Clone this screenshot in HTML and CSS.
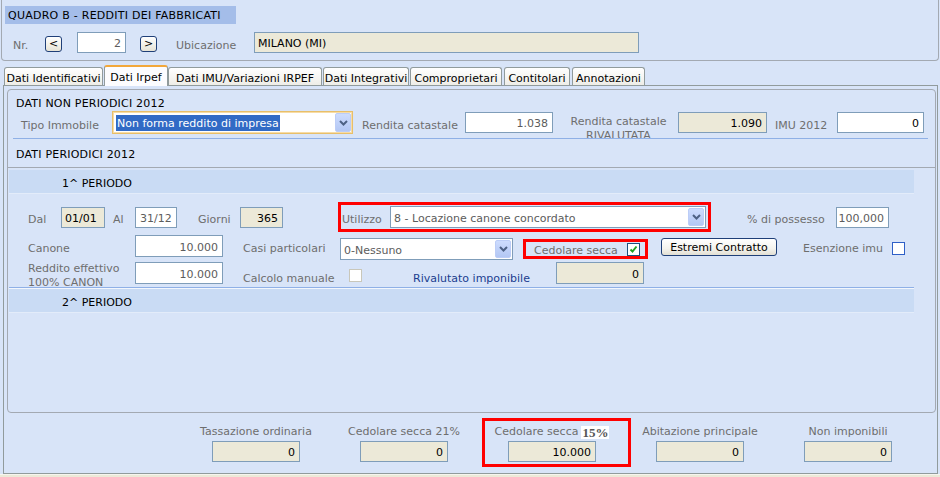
FILE: index.html
```html
<!DOCTYPE html>
<html>
<head>
<meta charset="utf-8">
<title>Quadro B</title>
<link rel="stylesheet" href="styles.css">
</head>
<body>
<div class="frame">
  <div class="head-box">
    <div class="quadro">QUADRO B - REDDITI DEI FABBRICATI</div>
    <div class="nr-row">
      <span class="lbl nr-lbl">Nr.</span>
      <div class="nav">&lt;</div>
      <div class="fld nr-fld">2</div>
      <div class="nav nav-next">&gt;</div>
      <span class="lbl ub-lbl">Ubicazione</span>
      <div class="fld ro ub-fld">MILANO (MI)</div>
    </div>
  </div>

  <div class="tabs">
    <div class="tab t1">Dati Identificativi</div>
    <div class="tab t2 active">Dati Irpef</div>
    <div class="tab t3">Dati IMU/Variazioni IRPEF</div>
    <div class="tab t4">Dati Integrativi</div>
    <div class="tab t5">Comproprietari</div>
    <div class="tab t6">Contitolari</div>
    <div class="tab t7">Annotazioni</div>
  </div>

  <div class="panel">
    <div class="inner">
      <div class="sec-title">DATI NON PERIODICI 2012</div>
      <div class="np-row">
        <span class="lbl tipo-lbl">Tipo Immobile</span>
        <div class="sel focus tipo-sel">
          <span class="hilite">Non forma reddito di impresa</span>
          <span class="dd"><svg width="9" height="6" viewBox="0 0 9 6"><path d="M1 1l3.5 3.5L8 1" fill="none" stroke="#4d6185" stroke-width="2"/></svg></span>
        </div>
        <span class="lbl rend-lbl">Rendita catastale</span>
        <div class="fld rend-fld">1.038</div>
        <span class="lbl riv-lbl">Rendita catastale<br>RIVALUTATA</span>
        <div class="fld ro riv-fld">1.090</div>
        <span class="lbl imu-lbl">IMU 2012</span>
        <div class="fld dark imu-fld">0</div>
      </div>
      <div class="sep"></div>
      <div class="sec-title per-title">DATI PERIODICI 2012</div>

      <div class="periods">
        <div class="band">1^ PERIODO</div>
        <div class="pbody">
          <div class="prow row1">
            <span class="lbl dal-lbl">Dal</span>
            <div class="fld ro dal-fld">01/01</div>
            <span class="lbl al-lbl">Al</span>
            <div class="fld al-fld">31/12</div>
            <span class="lbl gg-lbl">Giorni</span>
            <div class="fld ro gg-fld">365</div>
            <div class="hl hl-util">
              <span class="lbl util-lbl">Utilizzo</span>
              <div class="sel util-sel">
                <span class="sel-text">8 - Locazione canone concordato</span>
                <span class="dd"><svg width="9" height="6" viewBox="0 0 9 6"><path d="M1 1l3.5 3.5L8 1" fill="none" stroke="#4d6185" stroke-width="2"/></svg></span>
              </div>
            </div>
            <span class="lbl poss-lbl">% di possesso</span>
            <div class="fld poss-fld">100,000</div>
          </div>

          <div class="prow row2">
            <span class="lbl can-lbl">Canone</span>
            <div class="fld can-fld">10.000</div>
            <span class="lbl casi-lbl">Casi particolari</span>
            <div class="sel casi-sel">
              <span class="sel-text">0-Nessuno</span>
              <span class="dd"><svg width="9" height="6" viewBox="0 0 9 6"><path d="M1 1l3.5 3.5L8 1" fill="none" stroke="#4d6185" stroke-width="2"/></svg></span>
            </div>
            <div class="hl hl-ced">
              <span class="lbl ced-lbl">Cedolare secca</span>
              <span class="chk on"><svg width="11" height="11" viewBox="0 0 11 11"><path d="M2.5 5.5l2 2 4-5" fill="none" stroke="#21a121" stroke-width="2"/></svg></span>
            </div>
            <div class="btn estremi">Estremi Contratto</div>
            <span class="lbl esen-lbl">Esenzione imu</span>
            <span class="chk esen-chk"></span>
          </div>

          <div class="prow row3">
            <span class="lbl red-lbl">Reddito effettivo<br>100% CANON</span>
            <div class="fld red-fld">10.000</div>
            <span class="lbl calc-lbl">Calcolo manuale</span>
            <span class="chk off"></span>
            <span class="rival-lbl">Rivalutato imponibile</span>
            <div class="fld ro rival-fld">0</div>
          </div>
        </div>
        <div class="psep"></div>
        <div class="band">2^ PERIODO</div>
      </div>
    </div>

    <div class="summary">
      <div class="scol">
        <span class="lbl">Tassazione ordinaria</span>
        <div class="fld ro sfld">0</div>
      </div>
      <div class="scol">
        <span class="lbl">Cedolare secca 21%</span>
        <div class="fld ro sfld">0</div>
      </div>
      <div class="scol marked">
        <span class="lbl">Cedolare secca <b class="pct">15%</b></span>
        <div class="fld ro sfld">10.000</div>
      </div>
      <div class="scol">
        <span class="lbl">Abitazione principale</span>
        <div class="fld ro sfld">0</div>
      </div>
      <div class="scol">
        <span class="lbl">Non imponibili</span>
        <div class="fld ro sfld">0</div>
      </div>
    </div>
  </div>
  <div class="bottom-strip"></div>
</div>
</body>
</html>
```

FILE: styles.css
```css
*, *::before, *::after { box-sizing: border-box; }

html, body {
  margin: 0;
  padding: 0;
}

body {
  width: 940px;
  height: 477px;
  overflow: hidden;
  background: #d8e4f8;
  font-family: "DejaVu Sans", Tahoma, sans-serif;
  font-size: 11px;
  color: #000;
}

.frame {
  width: 940px;
  height: 477px;
  display: flex;
  flex-direction: column;
}

.lbl {
  color: #6e6e6e;
  white-space: nowrap;
}
.nr-row .lbl,
.np-row .lbl,
.prow .lbl {
  margin-top: 5px;
}

/* generic field */
.fld {
  height: 21px;
  border: 1px solid #7f9db9;
  background: #fff;
  display: flex;
  align-items: center;
  justify-content: flex-end;
  padding: 2px 4px 0;
  color: #5c5c5c;
  white-space: nowrap;
  flex: none;
}
.fld.ro {
  background: #ece9d8;
  color: #000;
}
.fld.dark { color: #000; }

/* header box */
.head-box {
  margin: 0 1px;
  height: 61px;
  border: 1px solid #a3a9b2;
  border-top: none;
  border-radius: 0 0 4px 4px;
  padding: 6px 0 0 3px;
  flex: none;
}
.quadro {
  width: 231px;
  height: 18px;
  line-height: 18px;
  background: #a4bde9;
  padding: 1px 0 0 3px;
  letter-spacing: 0.25px;
  white-space: nowrap;
}
.nr-row {
  margin-top: 8px;
  height: 21px;
  display: flex;
  align-items: center;
}
.nr-row .nr-lbl { margin-left: 8px; width: 32px; margin-top: 6px; }
.nav {
  width: 17px;
  height: 16px;
  border: 1px solid #1f3f78;
  border-radius: 3px;
  background: linear-gradient(#ffffff, #e6e3d6);
  display: flex;
  align-items: center;
  justify-content: center;
  font-size: 11px;
  line-height: 1;
  flex: none;
  margin-top: 2px;
}
.nr-fld { width: 49px; margin-left: 15px; }
.nav-next { margin-left: 14px; }
.nr-row .ub-lbl { margin-left: 19px; width: 78px; margin-top: 6px; }
.ub-fld { width: 385px; justify-content: flex-start; padding-left: 3px; }

/* tabs */
.tabs {
  margin-top: 4px;
  height: 20px;
  padding-left: 4px;
  display: flex;
  align-items: flex-end;
  flex: none;
  position: relative;
  z-index: 2;
}
.tab {
  height: 18px;
  border: 1px solid #919b9c;
  border-bottom: none;
  border-radius: 3px 3px 0 0;
  background: linear-gradient(#ffffff, #eeede7);
  display: flex;
  justify-content: center;
  padding-top: 4px;
  white-space: nowrap;
  flex: none;
  line-height: 13px;
}
.tab.active {
  height: 21px;
  margin-bottom: -1px;
  background: #fcfcfe;
  border-top: 2px solid #f2a73a;
  padding-top: 4px;
}
.t1 { width: 99px; margin-right: 1px; }
.t2 { width: 64px; }
.t3 { width: 154px; margin-right: 1px; }
.t4 { width: 86px; margin-right: 1px; }
.t5 { width: 92px; margin-right: 2px; }
.t6 { width: 66px; margin-right: 2px; }
.t7 { width: 73px; }

/* panel */
.panel {
  margin-left: 3px;
  width: 935px;
  height: 389px;
  border: 1px solid #919b9c;
  flex: none;
  display: flex;
  flex-direction: column;
}
.inner {
  margin: 3px 1px 0 3px;
  height: 324px;
  border: 1px solid #a3a9b2;
  border-radius: 4px;
  display: flex;
  flex-direction: column;
  flex: none;
}
.sec-title {
  margin-top: 4px;
  height: 16px;
  line-height: 16px;
  padding: 2px 0 0 8px;
  letter-spacing: 0.2px;
  white-space: nowrap;
}
.per-title { margin-top: 6px; }

.np-row {
  margin-top: 1px;
  height: 23px;
  display: flex;
  align-items: center;
}
.np-row .tipo-lbl { margin-left: 13px; width: 91px; }

/* selects */
.sel {
  border: 1px solid #7f9db9;
  background: #fff;
  display: flex;
  align-items: center;
  padding-left: 3px;
  flex: none;
  color: #5c5c5c;
  white-space: nowrap;
}
.sel-text { flex: 1; padding-top: 2px; }
.dd {
  margin-left: auto;
  margin-right: 1px;
  width: 16px;
  height: calc(100% - 2px);
  border: 1px solid #bccdf7;
  border-radius: 2px;
  background: linear-gradient(#cddcfe, #b3c7f4);
  display: flex;
  align-items: center;
  justify-content: center;
  flex: none;
}
.tipo-sel {
  width: 241px;
  height: 23px;
  border-color: #e8bf6a;
  box-shadow: inset 0 0 0 1px #f7dca6;
  padding-left: 3px;
}
.hilite {
  background: #316ac5;
  color: #fff;
  height: 16px;
  line-height: 17px;
  padding: 0 1px;
}
.np-row .rend-lbl { margin-left: 9px; width: 103px; }
.rend-fld { width: 88px; }
.np-row .riv-lbl {
  width: 125px;
  padding-left: 6px;
  text-align: center;
  line-height: 14px;
  align-self: flex-start;
  margin-top: 4px;
}
.riv-fld { width: 89px; }
.np-row .imu-lbl { width: 70px; padding-left: 8px; }
.imu-fld { width: 87px; }

.sep {
  margin: 4px 0 0 5px;
  width: 915px;
  height: 1px;
  background: #8fb0e6;
}

/* periods */
.periods {
  margin-top: 6px;
  border-top: 1px solid #a3a9b2;
  padding-top: 2px;
  flex: 1;
}
.band {
  margin-left: 1px;
  width: 905px;
  height: 24px;
  line-height: 23px;
  padding: 2px 0 0 53px;
  background: #c9dbf4;
  border-bottom: 1px solid #e3ecfa;
}
.pbody {
  margin-left: 1px;
  padding-top: 8px;
}
.prow {
  display: flex;
  align-items: center;
}
.row1 { height: 30px; }
.row2 { height: 28px; }
.row3 { height: 22px; margin-top: 2px; }

.prow .dal-lbl { margin-left: 19px; width: 33px; }
.dal-fld { width: 44px; justify-content: flex-start; padding-left: 3px; }
.prow .al-lbl { margin-left: 8px; width: 22px; }
.al-fld { width: 42px; justify-content: flex-start; padding-left: 4px; }
.prow .gg-lbl { margin-left: 21px; width: 42px; }
.gg-fld { width: 43px; }

.hl {
  border: 3px solid #ff0000;
  display: flex;
  align-items: center;
  flex: none;
}
.hl-util {
  margin-left: 55px;
  width: 373px;
  height: 30px;
}
.prow .util-lbl { padding-left: 1px; width: 49px; }
.util-sel { width: 316px; height: 22px; }
.prow .poss-lbl { margin-left: 36px; width: 89px; }
.poss-fld { width: 53px; }

.prow .can-lbl { margin-left: 19px; width: 107px; }
.can-fld { width: 88px; height: 22px; }
.prow .casi-lbl { margin-left: 20px; width: 97px; }
.casi-sel { width: 173px; height: 22px; align-self: flex-end; }
.hl-ced {
  margin-left: 10px;
  width: 125px;
  height: 20px;
  align-self: flex-end;
  margin-bottom: 1px;
  padding-left: 8px;
}
.prow .ced-lbl { width: 93px; margin-top: 3px; }

.chk {
  width: 13px;
  height: 13px;
  border: 1px solid #1c5180;
  background: #fff;
  display: flex;
  align-items: center;
  justify-content: center;
  flex: none;
}
.chk.off {
  border-color: #c9c7ba;
  margin-top: 4px;
}
.esen-chk { border-color: #2e5fc7; margin-top: 4px; }

.btn {
  border: 1px solid #1f3f78;
  border-radius: 3px;
  background: linear-gradient(#ffffff 0%, #f4f3ee 60%, #e2dfd3 100%);
  display: flex;
  align-items: center;
  justify-content: center;
  flex: none;
  color: #000;
  white-space: nowrap;
  padding-top: 1px;
}
.estremi {
  margin-left: 13px;
  width: 116px;
  height: 18px;
  align-self: flex-start;
  margin-top: 6px;
}
.prow .esen-lbl { margin-left: 26px; width: 89px; }

.prow .red-lbl {
  margin-left: 19px;
  width: 107px;
  line-height: 14px;
  margin-top: 6px;
}
.red-fld { width: 88px; height: 22px; }
.prow .calc-lbl { margin-left: 20px; width: 106px; margin-top: 10px; }
.rival-lbl {
  margin-left: 51px;
  width: 143px;
  color: #1b3d8f;
  margin-top: 10px;
  white-space: nowrap;
}
.rival-fld { width: 88px; height: 22px; }

.psep {
  margin: 3px 0 0 1px;
  width: 905px;
  height: 2px;
  border-top: 1px solid #8fb0e6;
  border-bottom: 1px solid #f2f6fd;
}

/* summary */
.summary {
  margin-left: 178px;
  margin-top: 12px;
  display: grid;
  grid-template-columns: repeat(5, 148px);
}
.scol {
  display: flex;
  flex-direction: column;
  align-items: center;
  position: relative;
}
.scol .lbl {
  height: 14px;
  line-height: 14px;
  display: flex;
  align-items: center;
  gap: 3px;
}
.sfld {
  margin-top: 2px;
  width: 88px;
  height: 21px;
}
.pct {
  font-family: "Liberation Serif", "Times New Roman", serif;
  font-weight: bold;
  font-size: 13px;
  line-height: 13px;
  color: #555;
  background: #fff;
  padding: 0 1px;
}
.marked::after {
  content: "";
  position: absolute;
  left: 4px;
  top: -7px;
  width: 149px;
  height: 49px;
  border: 3px solid #ff0000;
}

.bottom-strip {
  flex: 1;
  background: #ece9d8;
  border-top: 1px solid #f6f5ef;
}
```
